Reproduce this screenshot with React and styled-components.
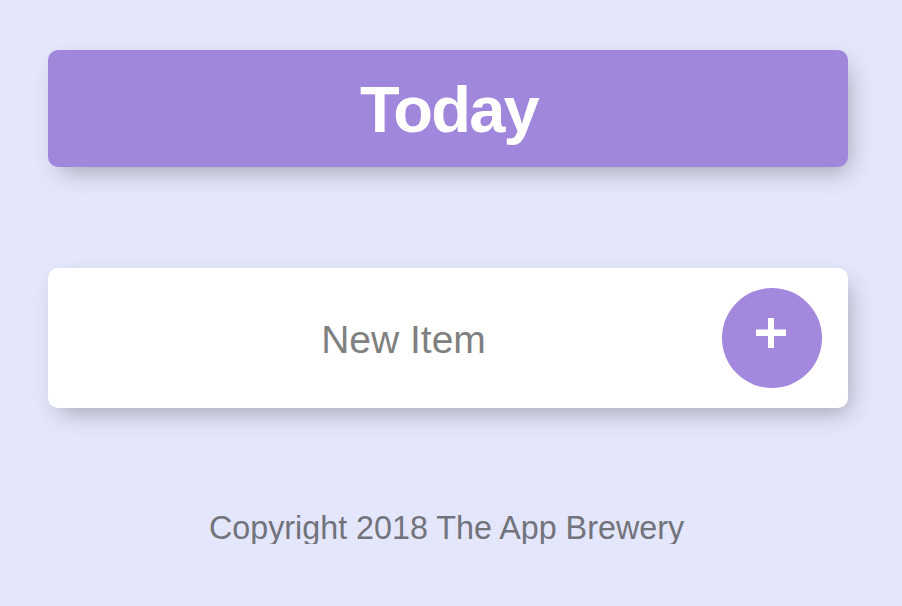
import React from "react";
import styled, { createGlobalStyle } from "styled-components";

const Global = createGlobalStyle`
  html, body { margin: 0; padding: 0; }
  body {
    background: #E4E7FB;
    font-family: "Liberation Sans", Helvetica, Arial, sans-serif;
  }
`;

const Page = styled.div`
  width: 800px;
  margin: 0 0 0 48px;
  padding-top: 50px;
  display: flex;
  flex-direction: column;
`;

const Header = styled.div`
  height: 117px;
  border-radius: 10px;
  background: #A187DC;
  box-shadow: 6px 10px 24px -6px rgba(0, 0, 0, 0.3);
  display: flex;
  align-items: center;
  justify-content: center;
`;

const Title = styled.h1`
  margin: 0;
  color: #fff;
  font-size: 65px;
  font-weight: 700;
  letter-spacing: -1.7px;
  line-height: 1;
  padding: 1px 0 0 2px;
`;

const Item = styled.div`
  margin-top: 101px;
  height: 140px;
  box-sizing: border-box;
  border-radius: 10px;
  background: #fff;
  box-shadow: 6px 10px 24px -6px rgba(0, 0, 0, 0.3);
  display: flex;
  align-items: center;
  padding: 0 26px 0 37px;
`;

const ItemText = styled.div`
  flex: 1;
  text-align: center;
  color: #808080;
  font-size: 39px;
  line-height: 1;
  padding-top: 2px;
`;

const AddButton = styled.button`
  width: 100px;
  height: 100px;
  border: none;
  border-radius: 50%;
  background: #A388DD;
  display: flex;
  align-items: center;
  justify-content: center;
  padding: 0 2px 11px 0;
  box-sizing: border-box;
`;

const Footer = styled.footer`
  margin-top: 104px;
  text-align: center;
  color: #72737B;
  font-size: 32.3px;
  line-height: 1;
  padding-right: 3px;
`;

const Plus = () => (
  <svg width="30" height="30" viewBox="0 0 30 30">
    <rect x="12" y="0" width="6" height="30" fill="#fff" />
    <rect x="0" y="11.5" width="30" height="6.5" fill="#fff" />
  </svg>
);

export default function App() {
  return (
    <>
      <Global />
      <Page>
        <Header>
          <Title>Today</Title>
        </Header>
        <Item>
          <ItemText>New Item</ItemText>
          <AddButton aria-label="add">
            <Plus />
          </AddButton>
        </Item>
        <Footer>Copyright 2018 The App Brewery</Footer>
      </Page>
    </>
  );
}
